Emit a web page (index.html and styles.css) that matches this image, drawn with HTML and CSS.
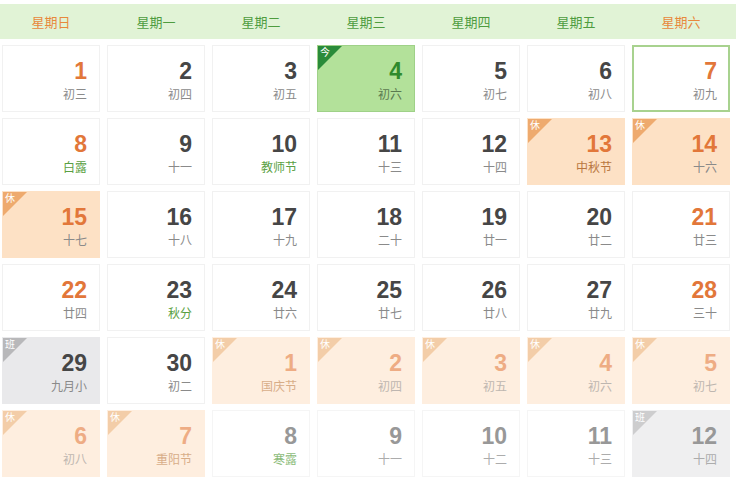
FILE: index.html
```html
<!DOCTYPE html>
<html lang="zh">
<head>
<meta charset="utf-8">
<link rel="stylesheet" href="styles.css">
</head>
<body>
<div class="cal">
  <div class="head">
    <div class="wk we">星期日</div>
    <div class="wk">星期一</div>
    <div class="wk">星期二</div>
    <div class="wk">星期三</div>
    <div class="wk">星期四</div>
    <div class="wk">星期五</div>
    <div class="wk we">星期六</div>
  </div>
  <div class="grid">
    <div class="cell"><div class="num we">1</div><div class="lun">初三</div></div>
    <div class="cell"><div class="num">2</div><div class="lun">初四</div></div>
    <div class="cell"><div class="num">3</div><div class="lun">初五</div></div>
    <div class="cell today"><span class="tag">今</span><div class="num">4</div><div class="lun">初六</div></div>
    <div class="cell"><div class="num">5</div><div class="lun">初七</div></div>
    <div class="cell"><div class="num">6</div><div class="lun">初八</div></div>
    <div class="cell sel"><div class="num we">7</div><div class="lun">初九</div></div>

    <div class="cell"><div class="num we">8</div><div class="lun term">白露</div></div>
    <div class="cell"><div class="num">9</div><div class="lun">十一</div></div>
    <div class="cell"><div class="num">10</div><div class="lun term">教师节</div></div>
    <div class="cell"><div class="num">11</div><div class="lun">十三</div></div>
    <div class="cell"><div class="num">12</div><div class="lun">十四</div></div>
    <div class="cell rest"><span class="tag">休</span><div class="num we">13</div><div class="lun fest">中秋节</div></div>
    <div class="cell rest"><span class="tag">休</span><div class="num we">14</div><div class="lun">十六</div></div>

    <div class="cell rest"><span class="tag">休</span><div class="num we">15</div><div class="lun">十七</div></div>
    <div class="cell"><div class="num">16</div><div class="lun">十八</div></div>
    <div class="cell"><div class="num">17</div><div class="lun">十九</div></div>
    <div class="cell"><div class="num">18</div><div class="lun">二十</div></div>
    <div class="cell"><div class="num">19</div><div class="lun">廿一</div></div>
    <div class="cell"><div class="num">20</div><div class="lun">廿二</div></div>
    <div class="cell"><div class="num we">21</div><div class="lun">廿三</div></div>

    <div class="cell"><div class="num we">22</div><div class="lun">廿四</div></div>
    <div class="cell"><div class="num">23</div><div class="lun term">秋分</div></div>
    <div class="cell"><div class="num">24</div><div class="lun">廿六</div></div>
    <div class="cell"><div class="num">25</div><div class="lun">廿七</div></div>
    <div class="cell"><div class="num">26</div><div class="lun">廿八</div></div>
    <div class="cell"><div class="num">27</div><div class="lun">廿九</div></div>
    <div class="cell"><div class="num we">28</div><div class="lun">三十</div></div>

    <div class="cell work"><span class="tag">班</span><div class="num">29</div><div class="lun">九月小</div></div>
    <div class="cell"><div class="num">30</div><div class="lun">初二</div></div>
    <div class="cell rest next"><span class="tag">休</span><div class="num we">1</div><div class="lun fest">国庆节</div></div>
    <div class="cell rest next"><span class="tag">休</span><div class="num we">2</div><div class="lun">初四</div></div>
    <div class="cell rest next"><span class="tag">休</span><div class="num we">3</div><div class="lun">初五</div></div>
    <div class="cell rest next"><span class="tag">休</span><div class="num we">4</div><div class="lun">初六</div></div>
    <div class="cell rest next"><span class="tag">休</span><div class="num we">5</div><div class="lun">初七</div></div>

    <div class="cell rest next"><span class="tag">休</span><div class="num we">6</div><div class="lun">初八</div></div>
    <div class="cell rest next"><span class="tag">休</span><div class="num we">7</div><div class="lun fest">重阳节</div></div>
    <div class="cell next"><div class="num">8</div><div class="lun term">寒露</div></div>
    <div class="cell next"><div class="num">9</div><div class="lun">十一</div></div>
    <div class="cell next"><div class="num">10</div><div class="lun">十二</div></div>
    <div class="cell next"><div class="num">11</div><div class="lun">十三</div></div>
    <div class="cell work next"><span class="tag">班</span><div class="num">12</div><div class="lun">十四</div></div>
  </div>
</div>
</body>
</html>
```

FILE: styles.css
```css
html, body {
  margin: 0;
  padding: 0;
  background: #ffffff;
}
body {
  font-family: "Liberation Sans", Arial, "Noto Sans CJK SC", sans-serif;
  width: 736px;
  height: 488px;
  overflow: hidden;
}
.cal {
  padding-top: 4px;
}
.head {
  display: grid;
  grid-template-columns: repeat(7, 98px);
  column-gap: 7px;
  padding: 0 6px 0 2px;
  height: 35px;
  align-items: center;
  background: #e1f3d6;
}
.wk {
  text-align: center;
  font-size: 13px;
  color: #4e9c3f;
  font-family: "Noto Sans CJK SC", sans-serif;
}
.wk.we {
  color: #e8883c;
}
.grid {
  margin-top: 6px;
  padding-left: 2px;
  display: grid;
  grid-template-columns: repeat(7, 98px);
  grid-auto-rows: 67px;
  column-gap: 7px;
  row-gap: 6px;
}
.cell {
  position: relative;
  box-sizing: border-box;
  border: 1px solid #f1f1f1;
  background: #ffffff;
  text-align: right;
  padding: 12px 12px 0 0;
  overflow: hidden;
}
.num {
  font-weight: bold;
  font-size: 23px;
  line-height: 26px;
  color: #464646;
}
.num.we {
  color: #e2773a;
}
.lun {
  font-family: "Noto Sans CJK SC", sans-serif;
  font-size: 12px;
  line-height: 18px;
  color: #8a8a8a;
  margin-top: 1px;
}
.lun.term {
  color: #5a9f43;
}
.lun.fest {
  color: #b9773f;
}
.tag {
  position: absolute;
  left: 0;
  top: 0;
  width: 24px;
  height: 24px;
  clip-path: polygon(0 0, 100% 0, 0 100%);
  font-family: "Noto Sans CJK SC", sans-serif;
  font-size: 10px;
  line-height: 12px;
  color: #ffffff;
  text-align: left;
  padding: 0 0 0 2px;
  box-sizing: border-box;
}
.today {
  background: #b3e19a;
  border: 1px solid #9fd188;
}
.today .num {
  color: #2f8a2c;
}
.today .lun {
  color: #5b7a50;
}
.today .tag {
  background: #2a8b3a;
}
.sel {
  border: 2px solid #a8d28f;
  padding: 11px 11px 0 0;
}
.rest {
  background: #fde1c5;
  border-color: #fde1c5;
}
.rest .tag {
  background: #eeaa6e;
}
.work {
  background: #e9e9eb;
  border-color: #e9e9eb;
}
.work .tag {
  background: #b8b8ba;
}
.next {
  opacity: 0.7;
}
.next .num {
  color: #6d6d6d;
}
.next .num.we {
  color: #e2773a;
}
.rest.next {
  opacity: 1;
  background: #feeedf;
  border-color: #feeedf;
}
.rest.next .num, .rest.next .lun {
  opacity: 0.55;
}
.rest.next .tag {
  background: #f3cda8;
}
```
